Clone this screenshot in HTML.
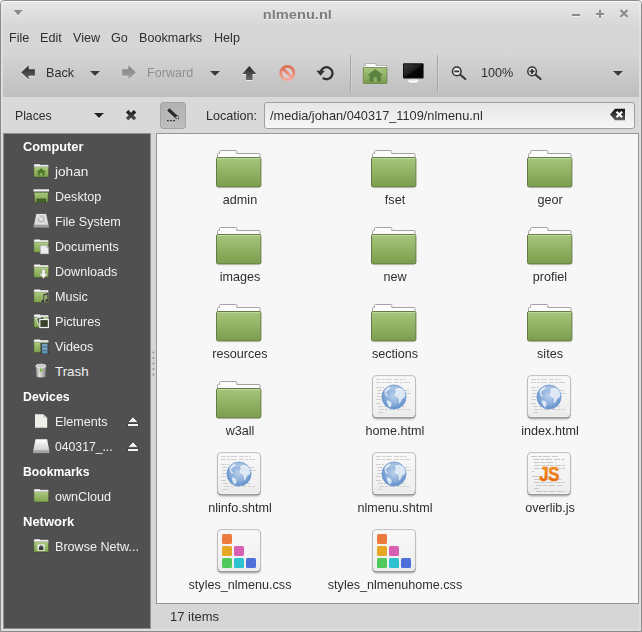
<!DOCTYPE html>
<html>
<head>
<meta charset="utf-8">
<title>nlmenu.nl</title>
<style>
*{box-sizing:border-box;margin:0;padding:0}
html,body{width:642px;height:632px;overflow:hidden;background:#fff}
body{font-family:"Liberation Sans",sans-serif;font-size:13.33px;color:#2e2e2e;position:relative}
.abs{position:absolute}
#win{position:absolute;left:0;top:0;width:642px;height:632px;border:1px solid #8b8b8b;border-radius:4px 4px 0 0;background:#d6d6d6;overflow:hidden}
#titlebar{position:absolute;left:0;top:0;width:640px;height:27px;background:linear-gradient(#e6e6e6,#d6d6d6);border-top:1px solid #f8f8f8;border-radius:3px 3px 0 0}
#title{position:absolute;left:0;width:592px;top:5px;text-align:center;font-weight:bold;color:#7d7d7d;text-shadow:0 1px 0 #f4f4f4;font-size:13.3px;letter-spacing:0}
.t{position:absolute;white-space:nowrap;line-height:16px;transform:scaleX(0.945);transform-origin:0 0}
#toolbar{position:absolute;left:0;top:50px;width:640px;height:47px;background:linear-gradient(#d6d6d6,#bebebe);border-bottom:1px solid #9c9c9c}
#locbar{position:absolute;left:0;top:96px;width:640px;height:36px;background:#d9d9d9}
#sidebar{position:absolute;left:2px;top:132px;width:148px;height:496px;background:#505050;border:1px solid #8f8f8f;color:#f0f0f0}
#sidebar .h{font-weight:bold;color:#fff;left:19px}
#sidebar .i{left:51px}
#view{position:absolute;left:155px;top:132px;width:483px;height:471px;background:#f7f7f7;border:1px solid #969696}
#status{position:absolute;left:150px;top:603px;width:490px;height:27px;background:#d6d6d6}
.lbl{position:absolute;width:150px;text-align:center;white-space:nowrap;line-height:16px;color:#2e2e2e;transform:scaleX(0.945);transform-origin:50% 0}
svg{position:absolute;overflow:visible}
</style>
</head>
<body>

<svg width="0" height="0" style="position:absolute">
  <defs>
    <linearGradient id="gFold" x1="0" y1="0" x2="0" y2="1">
      <stop offset="0" stop-color="#a7c67c"/><stop offset="1" stop-color="#7b9d4d"/>
    </linearGradient>
    <linearGradient id="gPage" x1="0" y1="0" x2="0" y2="1">
      <stop offset="0" stop-color="#f8f8f8"/><stop offset="0.800" stop-color="#f0f0f0"/><stop offset="1" stop-color="#e9e9e9"/>
    </linearGradient>
    <radialGradient id="gGlobe" cx="0.5" cy="0.45" r="0.55">
      <stop offset="0" stop-color="#bcd2ec"/><stop offset="0.600" stop-color="#8db0dc"/><stop offset="1" stop-color="#5f8dc8"/>
    </radialGradient>
    <linearGradient id="gJS" x1="0" y1="0" x2="0" y2="1">
      <stop offset="0" stop-color="#f59a22"/><stop offset="1" stop-color="#e85f0a"/>
    </linearGradient>
    <filter id="blur1" x="-20%" y="-20%" width="140%" height="140%"><feGaussianBlur stdDeviation="0.8"/></filter>

    <linearGradient id="gSF" x1="0" y1="0" x2="0" y2="1">
      <stop offset="0" stop-color="#a9c97c"/><stop offset="1" stop-color="#7fa24e"/>
    </linearGradient>
    <linearGradient id="gDrive" x1="0" y1="0" x2="0" y2="1">
      <stop offset="0" stop-color="#ffffff"/><stop offset="1" stop-color="#c4c4c4"/>
    </linearGradient>
    <linearGradient id="gTrash" x1="0" y1="0" x2="1" y2="0">
      <stop offset="0" stop-color="#8e8e8e"/><stop offset="0.35" stop-color="#e2e2e2"/><stop offset="1" stop-color="#8a8a8a"/>
    </linearGradient>
    <symbol id="sf" viewBox="0 0 16 14" overflow="visible">
      <path d="M0.300 4.500V1Q0.300 0 1.300 0H6.500L7.300 0.700H14.700Q15.700 0.700 15.700 1.700V4.500z" fill="#f8f8f8" stroke="#3a3a3a" stroke-width="0.400"/>
      <rect x="0.300" y="3.100" width="15.400" height="10.500" rx="0.800" fill="url(#gSF)" stroke="#3c4a2c" stroke-width="0.600"/>
      <path d="M0.800 3.700h14.400" stroke="#c6dea0" stroke-width="0.600"/>
    </symbol>
    <symbol id="folder" viewBox="0 0 46 39" overflow="visible">
      <rect x="1.500" y="33.500" width="42.400" height="4" rx="1.500" fill="#000" opacity="0.18" filter="url(#blur1)"/>
      <path d="M1.500 9V4.500Q1.500 3.500 2.500 3.500H3.500V1.500Q3.500 0.500 4.500 0.500H19.800Q20.800 0.500 20.800 1.500V3.500H43Q44 3.500 44 4.500V9z" fill="#fcfcfc" stroke="#a3a3a3"/>
      <rect x="0.500" y="7.500" width="44.400" height="29.400" rx="1.500" fill="url(#gFold)" stroke="#667c48"/>
      <path d="M1.500 9.500V8.500h42.400v1" fill="none" stroke="#c3dba0" stroke-width="1" opacity="0.9"/>
    </symbol>
    <symbol id="page" viewBox="0 0 46 46" overflow="visible">
      <rect x="2" y="3.500" width="42" height="40.500" rx="4" fill="#000" opacity="0.400" filter="url(#blur1)"/>
      <rect x="1.300" y="1.600" width="43.400" height="41.500" rx="3.800" fill="#707070"/>
      <rect x="1.500" y="0.600" width="43" height="41.400" rx="3.500" fill="url(#gPage)" stroke="#bdbdbd"/>
      <path d="M3.500 41.400h39" stroke="#fbfbfb" stroke-width="0.900"/>
    </symbol>
    <symbol id="html" viewBox="0 0 46 46" overflow="visible">
      <use href="#page" width="46" height="46"/>
      <g stroke="#c6c6c6" stroke-width="0.800" stroke-dasharray="5 1 3 1 6 2">
        <path d="M5 4.500h30M5 7.500h34M5 12.500h8M6 15.500h32M6 18.500h34M6 21.500h30M5 24.500h10M5 28.500h6M7 31.500h28M8 34.500h31M7 37.500h5"/>
      </g>
      <circle cx="23" cy="22" r="12" fill="url(#gGlobe)" stroke="#6f9ad0" stroke-width="0.900"/>
      <g fill="#e6eef8" stroke="#6a95cb" stroke-width="0.400" opacity="0.900">
        <path d="M24.500 13.500c2.500-1.500 6-1 8 1 2 2 2.600 5 1.800 7.500-0.500 1.200-1.500 0.800-2.500 1.500-1.200 1-1.300 3-2.600 4.500-0.800 0.900-1.800 0.300-1.800-1 0-1.600 0.400-2.800-0.600-3.800-1.200-1.200-3.200-0.800-3.700-2.600-0.400-1.500 1-2.200 1-3.600 0-1.300-0.800-2.500 0.400-3.500z"/>
        <path d="M13.500 16c1-2 3-3.800 5.500-4.500 1.500 0.500 0.500 2-0.500 3-1.200 1.200-2.800 1.500-3 3.200-0.200 1.500 1.200 2 1.800 3.300 0.400 1-0.600 1.400-1.600 0.800-1.500-1-2.800-3.300-2.200-5.800z"/>
        <path d="M15.500 25c1.800-0.300 4 0.800 5 2.500 0.900 1.600 0.200 3.500-1 4.800-0.600 0.600-1.200 0.200-1.700-0.500-1.300-1.800-2.500-4.200-2.300-6.800z"/>
      </g>
      <path d="M12.500 17a11.500 11.500 0 0 1 21 0a16 10 0 0 0-21 0z" fill="#fff" opacity="0.250"/>
    </symbol>
    <symbol id="js" viewBox="0 0 46 46" overflow="visible">
      <use href="#page" width="46" height="46"/>
      <g stroke="#bcbcbc" stroke-width="0.800" stroke-dasharray="6 1 4 1 7 2">
        <path d="M5 4.500h27M7 7.500h32M8 10.500h22M8 13.500h31M8 16.500h31M6 19.500h2M6 24.500h20M8 27.500h28M8 30.500h31M10 33.500h26M8 36.500h5M10 39.500h29"/>
      </g>
      <text transform="translate(13.300,28.800) scale(0.860,1)" font-family="Liberation Sans, sans-serif" font-weight="bold" font-size="19.500" letter-spacing="-0.500" fill="url(#gJS)" stroke="#ee7a14" stroke-width="0.500">JS</text>
    </symbol>
    <symbol id="css" viewBox="0 0 46 46" overflow="visible">
      <use href="#page" width="46" height="46"/>
      <rect x="6" y="5" width="10" height="10" rx="1.500" fill="#ee7b3e"/>
      <rect x="6" y="17" width="10" height="10" rx="1.500" fill="#e6a822"/>
      <rect x="18" y="17" width="10" height="10" rx="1.500" fill="#d860b2"/>
      <rect x="6" y="29" width="10" height="10" rx="1.500" fill="#4fc95c"/>
      <rect x="18" y="29" width="10" height="10" rx="1.500" fill="#2cc2d2"/>
      <rect x="30" y="29" width="10" height="10" rx="1.500" fill="#4f70da"/>
    </symbol>
  </defs>
</svg>
<div id="win">
  <div id="titlebar">
    <div id="title"><span style="display:inline-block;transform:scaleX(1.100)">nlmenu.nl</span></div>
    <svg style="left:0;top:-1px" width="640" height="27">
      <path d="M12.600 10h9l-4.500 5.500z" fill="#f4f4f4"/>
      <path d="M12.600 9h9l-4.500 5.500z" fill="#8c8c8c"/>
      <g fill="#f4f4f4"><rect x="571" y="14" width="8" height="2"/><rect x="595" y="13" width="8" height="2"/><rect x="598" y="10" width="2" height="8"/></g>
      <g fill="#8c8c8c"><rect x="571" y="13" width="8" height="2"/><rect x="595" y="12" width="8" height="2"/><rect x="598" y="9" width="2" height="8"/></g>
      <path d="M619.500 10l7 7m0-7l-7 7" stroke="#f4f4f4" stroke-width="2.200" fill="none"/>
      <path d="M619.500 9l7 7m0-7l-7 7" stroke="#8c8c8c" stroke-width="2.200" fill="none"/>
    </svg>
  </div>
  <div class="t" style="left:7.500px;top:29px">File</div>
  <div class="t" style="left:39px;top:29px">Edit</div>
  <div class="t" style="left:72px;top:29px">View</div>
  <div class="t" style="left:110px;top:29px">Go</div>
  <div class="t" style="left:138px;top:29px">Bookmarks</div>
  <div class="t" style="left:213px;top:29px">Help</div>

  <div id="toolbar">
    <div class="t" style="left:45px;top:13.700px">Back</div>
    <div class="t" style="left:146px;top:13.700px;color:#8f8f8f">Forward</div>
    <div class="t" style="left:480px;top:13.700px">100%</div>
    <svg style="left:0;top:-1px" width="640" height="47">
      <defs>
        <linearGradient id="gArr" x1="0" y1="0" x2="0" y2="1"><stop offset="0" stop-color="#262626"/><stop offset="1" stop-color="#666"/></linearGradient>
        <linearGradient id="gArrD" x1="0" y1="0" x2="0" y2="1"><stop offset="0" stop-color="#808080"/><stop offset="1" stop-color="#a4a4a4"/></linearGradient>
        <linearGradient id="gStop" x1="0" y1="0" x2="0" y2="1"><stop offset="0" stop-color="#dc6f58"/><stop offset="1" stop-color="#f2a898"/></linearGradient>
        <linearGradient id="gScr" x1="0" y1="0" x2="1" y2="1"><stop offset="0" stop-color="#3c3c3c"/><stop offset="0.5" stop-color="#1c1c1c"/><stop offset="0.520" stop-color="#0a0a0a"/><stop offset="1" stop-color="#000"/></linearGradient>
      </defs>
      <!-- back arrow (page y = local+50) -->
      <path d="M20.200 23.500l7.500-7v3.800h6.200v6.400h-6.200v3.800z" fill="#f2f2f2" opacity="0.8"/>
      <path d="M20.200 22.500l7.500-7v3.800h6.200v6.400h-6.200v3.800z" fill="url(#gArr)"/>
      <path d="M89 22h10l-5 5z" fill="#ececec" opacity="0.7"/>
      <path d="M89 21h10l-5 5z" fill="#3c3c3c"/>
      <path d="M134.900 22.500l-7.500-7v3.800h-6.200v6.400h6.200v3.800z" fill="#ececec" opacity="0.500" transform="translate(0,1)"/>
      <path d="M134.900 22.500l-7.500-7v3.800h-6.200v6.400h6.200v3.800z" fill="url(#gArrD)"/>
      <path d="M209 22h10l-5 5z" fill="#ececec" opacity="0.7"/>
      <path d="M209 21h10l-5 5z" fill="#3c3c3c"/>
      <!-- up -->
      <path d="M248.300 17l7 8h-3.800v6h-6.400v-6h-3.800z" fill="#f2f2f2" opacity="0.8"/>
      <path d="M248.300 16l7 8h-3.800v6h-6.400v-6h-3.800z" fill="url(#gArr)"/>
      <!-- stop -->
      <circle cx="286.300" cy="23" r="7.900" fill="#dcd2cf" opacity="0.7"/>
      <circle cx="286.300" cy="23" r="6.600" fill="none" stroke="url(#gStop)" stroke-width="2.900"/>
      <path d="M281.800 18.500l9 9" stroke="url(#gStop)" stroke-width="2.900"/>
      <!-- reload -->
      <g transform="translate(-0.700,-0.600)">
      <path d="M320.500 22a6 6 0 1 1 2 6.500" fill="none" stroke="#303030" stroke-width="2.300"/>
      <path d="M316 21.300h8.500l-4.200 5z" fill="#303030"/>
      </g>
      <rect x="349" y="5" width="1" height="37" fill="#a6a6a6"/>
      <rect x="350" y="5" width="1" height="37" fill="#dadada" opacity="0.6"/>
      <rect x="436" y="5" width="1" height="37" fill="#a6a6a6"/>
      <rect x="437" y="5" width="1" height="37" fill="#dadada" opacity="0.6"/>
      <!-- home folder: page x 363..387, y 63..84 -> local y 13..34 -->
      <path d="M362.500 19V15.500H364.500V13.500H375V15.500H385.500V19z" fill="#fbfbfb" stroke="#a8a8a8" stroke-width="0.800"/>
      <rect x="362.300" y="17.500" width="23.600" height="16" rx="0.800" fill="url(#gFold)" stroke="#6a8248" stroke-width="0.800"/>
      <path d="M374.200 19l-8 6.200h2.200v6.600h11.600v-6.600h2.200z" fill="#5b8240"/>
      <rect x="372.700" y="27.300" width="3.200" height="4.500" fill="#8fb262"/>
      <!-- computer: page x 403..423 y 63.5..78.4 -> local 13.5..28.4 -->
      <ellipse cx="412.200" cy="31.600" rx="5.400" ry="1.800" fill="#9f9f9f"/>
      <ellipse cx="412.200" cy="30.900" rx="5.400" ry="2" fill="#f6f6f6"/>
      <path d="M409.800 28h5l0.600 2.400h-6.200z" fill="#dedede"/>
      <rect x="402" y="13.300" width="20.600" height="15.200" rx="1" fill="#0e0e0e"/>
      <rect x="403" y="14.300" width="18.600" height="13" fill="url(#gScr)"/>
      <!-- zoom out: lens centre page (456.8,71.4) -> local (455.8,21.4) -->
      <g fill="none" stroke="#333" stroke-linecap="round">
        <circle cx="455.800" cy="21.400" r="4.300" stroke-width="1.500" fill="#e6e6e6"/>
        <path d="M459.300 24.800l5 4.200" stroke-width="2"/>
        <path d="M453.300 21.400h5" stroke-width="1.800" stroke-linecap="butt"/>
        <circle cx="531.100" cy="21.400" r="4.300" stroke-width="1.500" fill="#e6e6e6"/>
        <path d="M534.600 24.800l5 4.200" stroke-width="2"/>
        <path d="M528.600 21.400h5M531.100 18.900v5" stroke-width="1.800" stroke-linecap="butt"/>
      </g>
      <path d="M612 22h10l-5 5z" fill="#ececec" opacity="0.7"/>
      <path d="M612 21h10l-5 5z" fill="#3c3c3c"/>
    </svg>
  </div>

  <div id="locbar">
    <div class="t" style="left:13.500px;top:11px;transform:scaleX(0.915)">Places</div>
    <div class="t" style="left:205px;top:11px">Location:</div>
    <div class="abs" style="left:159px;top:5px;width:26px;height:27px;background:linear-gradient(#b2b2b2,#bdbdbd);border:1px solid #a4a4a4;border-radius:3px"></div>
    <div class="abs" style="left:263px;top:5px;width:371px;height:27px;background:linear-gradient(#e6e6e6,#f6f6f6);border:1px solid #a0a0a0;border-radius:3px"></div>
    <div class="t" style="left:268.500px;top:11px;transform:scaleX(0.958)">/media/johan/040317_1109/nlmenu.nl</div>
    <svg style="left:0;top:0" width="640" height="36"><g transform="translate(-1,-97)">
      <path d="M94 114h10l-5 5z" fill="#f4f4f4" opacity="0.7"/>
      <path d="M94 113h10l-5 5z" fill="#222"/>
      <path d="M127.100 111.200l8 8m0-8l-8 8" stroke="#f4f4f4" stroke-width="3.400" fill="none" opacity="0.6" transform="translate(0,1)"/>
      <linearGradient id="gX" gradientUnits="userSpaceOnUse" x1="0" y1="110" x2="0" y2="120.500"><stop offset="0" stop-color="#151515"/><stop offset="1" stop-color="#5a5a5a"/></linearGradient><path d="M127.100 111.200l8 8m0-8l-8 8" stroke="url(#gX)" stroke-width="3.400" fill="none"/>
      <!-- pencil -->
      <path d="M168.300 109.500l7.900 7.200" stroke="#d6d6d6" stroke-width="3.400" opacity="0.6" transform="translate(-0.600,1)"/>
      <path d="M168.300 109.500l7.900 7.200" stroke="#2c2c2c" stroke-width="3.400"/>
      <path d="M175.300 118.300l2.700-2.900l0.600 3.600z" fill="#f6f6f6" stroke="#2c2c2c" stroke-width="0.700"/>
      <path d="M167 120.800h1.700m1.400 0h1.700m1.400 0h1.700" stroke="#2c2c2c" stroke-width="1.600"/>
      <path d="M167 122.100h1.700m1.400 0h1.700m1.400 0h1.700" stroke="#dedede" stroke-width="1" opacity="0.7"/>
      <!-- clear -->
      <linearGradient id="gClr" x1="0" y1="0" x2="0" y2="1"><stop offset="0" stop-color="#141414"/><stop offset="1" stop-color="#5c5c5c"/></linearGradient><path d="M610 114.500l5-5.700h10v11.400h-10z" fill="url(#gClr)"/>
      <path d="M616.500 111.700l5.600 5.600m0-5.600l-5.600 5.600" stroke="#fff" stroke-width="2" fill="none"/>
    </g></svg>
  </div>

  <div id="sidebar">

    <svg style="left:0;top:0" width="146" height="494"><g transform="translate(-4,-134)">
      <!-- johan home -->
      <use href="#sf" x="33.500" y="164" width="15.500" height="13.500"/>
      <path d="M41.200 168.200l-4.800 3.800h1.400v3.500h6.800v-3.500h1.400z" fill="#4f7a2c"/>
      <rect x="40.300" y="173" width="1.800" height="2.500" fill="#9cbf6c"/>
      <!-- desktop -->
      <rect x="33.500" y="189.300" width="15.500" height="2.300" fill="#f2f2f2"/>
      <path d="M34 192.200h14.500l-0.800 10.300h-12.900z" fill="url(#gSF)" stroke="#3c4a2c" stroke-width="0.600"/>
      <rect x="36.500" y="198.600" width="9.500" height="3.400" fill="#33481f"/>
      <rect x="37.300" y="199.300" width="7.900" height="2" fill="#4a6a2c"/>
      <!-- file system hdd -->
      <path d="M36 213.500h10.500l2.300 11v3h-15.100v-3z" fill="#d9d9d9" stroke="#3a3a3a" stroke-width="0.600"/>
      <path d="M33.700 224.700h15.100v2.800h-15.100z" fill="#9d9d9d"/>
      <circle cx="41.200" cy="219" r="4.600" fill="#c4c4c4" stroke="#f4f4f4" stroke-width="0.800"/>
      <circle cx="41.200" cy="219" r="1.300" fill="#ededed"/>
      <path d="M37 215.500l3.200 2.800" stroke="#f6f6f6" stroke-width="1"/>
      <!-- documents -->
      <use href="#sf" x="33.500" y="239.300" width="15.500" height="13.500"/>
      <path d="M40.300 245.300h5.700l2.700 2.600v6h-8.400z" fill="#ececec" stroke="#8a8a8a" stroke-width="0.500"/>
      <path d="M46 245.300v2.600h2.700z" fill="#c9c9c9"/>
      <!-- downloads -->
      <use href="#sf" x="33.500" y="264.300" width="15.500" height="13.500"/>
      <path d="M42 269.500h3v4.300h2.600l-4.100 4.800-4.100-4.800h2.600z" fill="#f4f4f4" stroke="#8d8d8d" stroke-width="0.400"/>
      <!-- music -->
      <use href="#sf" x="33.500" y="289.300" width="15.500" height="13.500"/>
      <path d="M43.300 294.300l5-1.500v7.700a1.500 1.300 0 1 1-1-1.200v-4.700l-3 0.900v5.900a1.500 1.300 0 1 1-1-1.200z" fill="#2c2c2c" stroke="#9a9a9a" stroke-width="0.300"/>
      <!-- pictures -->
      <use href="#sf" x="33.500" y="314.300" width="15.500" height="13.500"/>
      <g transform="rotate(-18 40 320)"><rect x="37" y="317.500" width="7.500" height="6.500" fill="#4c5b3a" stroke="#e6e6e6" stroke-width="0.900"/></g>
      <rect x="39.800" y="319.500" width="8.600" height="8" fill="#39452a" stroke="#efefef" stroke-width="1.200"/>
      <!-- videos -->
      <use href="#sf" x="33.500" y="339.300" width="15.500" height="13.500"/>
      <rect x="40.500" y="343" width="8.500" height="11" fill="#3a3a3a"/>
      <rect x="42" y="343.700" width="5.500" height="2.800" fill="#6aa6cf"/>
      <rect x="42" y="347.200" width="5.500" height="2.800" fill="#6aa6cf"/>
      <rect x="42" y="350.700" width="5.500" height="2.800" fill="#5b98c4"/>
      <path d="M40.500 346.800h8.500M40.500 350.300h8.500" stroke="#8a8a8a" stroke-width="0.500"/>
      <!-- trash -->
      <path d="M35.800 366h10.200l-0.700 10.800q-4.400 1.600-8.800 0z" fill="url(#gTrash)"/>
      <ellipse cx="40.900" cy="366" rx="5.200" ry="1.900" fill="#c9c9c9" stroke="#efefef" stroke-width="0.700"/>
      <path d="M39.800 368.500h2.200l0.200 4-1.300-0.900-1.300 0.900z" fill="#7fc043"/>
      <!-- Elements -->
      <path d="M35 414.200h8.300l3.900 3.800v9.700h-12.200z" fill="#efefea"/>
      <path d="M43.300 414.200v3.800h3.900z" fill="#cfcfca"/>
      <!-- 040317 -->
      <path d="M35.500 439.300h11.600l2.100 10.700v3h-15.800v-3z" fill="url(#gDrive)"/>
      <rect x="33.400" y="450.300" width="15.800" height="2.800" fill="#a2a2a2"/>
      <!-- eject -->
      <g fill="#f2f2f2" stroke="#1a1a1a" stroke-width="0.600">
        <path d="M133 416.800l5.300 5.600h-10.600z"/><rect x="127.700" y="423.700" width="10.600" height="2.800"/>
        <path d="M133 441.800l5.300 5.600h-10.600z"/><rect x="127.700" y="448.700" width="10.600" height="2.800"/>
      </g>
      <!-- owncloud -->
      <use href="#sf" x="33.500" y="489" width="15.500" height="13.500"/>
      <!-- network -->
      <use href="#sf" x="33.500" y="539" width="15.500" height="13.500"/>
      <rect x="37.500" y="544.300" width="7.300" height="6.500" fill="#e9e9e9"/>
      <path d="M39 550v-3.400h1.200v-1h2v1h1.200v3.400z" fill="#3a3a3a"/>
    </g></svg>
    <div class="t h" style="top:5px;transform:scaleX(0.960)">Computer</div>
    <div class="t i" style="top:30px;transform:scaleX(1.020)">johan</div>
    <div class="t i" style="top:55px">Desktop</div>
    <div class="t i" style="top:80px">File System</div>
    <div class="t i" style="top:105px">Documents</div>
    <div class="t i" style="top:130px">Downloads</div>
    <div class="t i" style="top:155px">Music</div>
    <div class="t i" style="top:180px">Pictures</div>
    <div class="t i" style="top:205px">Videos</div>
    <div class="t i" style="top:230px;transform:scaleX(1.000)">Trash</div>
    <div class="t h" style="top:255px;transform:scaleX(0.925)">Devices</div>
    <div class="t i" style="top:280px">Elements</div>
    <div class="t i" style="top:305px;transform:scaleX(0.915)">040317_...</div>
    <div class="t h" style="top:330px;transform:scaleX(0.915)">Bookmarks</div>
    <div class="t i" style="top:355px">ownCloud</div>
    <div class="t h" style="top:380px;transform:scaleX(0.975)">Network</div>
    <div class="t i" style="top:405px">Browse Netw...</div>
  </div>

  <svg style="left:150px;top:348px" width="6" height="30"><circle cx="2.500" cy="3.4" r="1" fill="#8e8e8e"/><circle cx="2.500" cy="9.0" r="1" fill="#8e8e8e"/><circle cx="2.500" cy="14.5" r="1" fill="#8e8e8e"/><circle cx="2.500" cy="20.0" r="1" fill="#8e8e8e"/><circle cx="2.500" cy="25.5" r="1" fill="#8e8e8e"/></svg>
  <div id="view">
    <svg style="left:59px;top:16px" width="46" height="39"><use href="#folder" width="46" height="39"/></svg>
    <svg style="left:214px;top:16px" width="46" height="39"><use href="#folder" width="46" height="39"/></svg>
    <svg style="left:370px;top:16px" width="46" height="39"><use href="#folder" width="46" height="39"/></svg>
    <svg style="left:59px;top:93px" width="46" height="39"><use href="#folder" width="46" height="39"/></svg>
    <svg style="left:214px;top:93px" width="46" height="39"><use href="#folder" width="46" height="39"/></svg>
    <svg style="left:370px;top:93px" width="46" height="39"><use href="#folder" width="46" height="39"/></svg>
    <svg style="left:59px;top:170px" width="46" height="39"><use href="#folder" width="46" height="39"/></svg>
    <svg style="left:214px;top:170px" width="46" height="39"><use href="#folder" width="46" height="39"/></svg>
    <svg style="left:370px;top:170px" width="46" height="39"><use href="#folder" width="46" height="39"/></svg>
    <svg style="left:59px;top:247px" width="46" height="39"><use href="#folder" width="46" height="39"/></svg>
    <svg style="left:214px;top:241.200px" width="46" height="46"><use href="#html" width="46" height="46"/></svg>
    <svg style="left:368.800px;top:241.200px" width="46" height="46"><use href="#html" width="46" height="46"/></svg>
    <svg style="left:59px;top:318.200px" width="46" height="46"><use href="#html" width="46" height="46"/></svg>
    <svg style="left:214px;top:318.200px" width="46" height="46"><use href="#html" width="46" height="46"/></svg>
    <svg style="left:368.800px;top:318.200px" width="46" height="46"><use href="#js" width="46" height="46"/></svg>
    <svg style="left:59px;top:395.200px" width="46" height="46"><use href="#css" width="46" height="46"/></svg>
    <svg style="left:214px;top:395.200px" width="46" height="46"><use href="#css" width="46" height="46"/></svg>
    <div class="lbl" style="left:8px;top:58px">admin</div>
    <div class="lbl" style="left:163px;top:58px">fset</div>
    <div class="lbl" style="left:318px;top:58px">geor</div>
    <div class="lbl" style="left:8px;top:135px">images</div>
    <div class="lbl" style="left:163px;top:135px">new</div>
    <div class="lbl" style="left:318px;top:135px">profiel</div>
    <div class="lbl" style="left:8px;top:212px">resources</div>
    <div class="lbl" style="left:163px;top:212px">sections</div>
    <div class="lbl" style="left:318px;top:212px">sites</div>
    <div class="lbl" style="left:8px;top:289px">w3all</div>
    <div class="lbl" style="left:163px;top:289px">home.html</div>
    <div class="lbl" style="left:318px;top:289px">index.html</div>
    <div class="lbl" style="left:8px;top:366px">nlinfo.shtml</div>
    <div class="lbl" style="left:163px;top:366px">nlmenu.shtml</div>
    <div class="lbl" style="left:318px;top:366px">overlib.js</div>
    <div class="lbl" style="left:8px;top:443px">styles_nlmenu.css</div>
    <div class="lbl" style="left:163px;top:443px">styles_nlmenuhome.css</div>
  </div>

  <div id="status">
    <div class="t" style="left:19px;top:5px;transform:scaleX(0.975)">17 items</div>
  </div>
  <div class="abs" style="left:0;top:1px;width:2px;height:629px;background:linear-gradient(#ececec,#dedede 27px)"></div>
  <div class="abs" style="left:638px;top:1px;width:2px;height:629px;background:linear-gradient(#ececec,#dedede 27px)"></div>
  <div class="abs" style="left:0;top:628px;width:640px;height:2px;background:#dedede"></div>
</div>
</body>
</html>
